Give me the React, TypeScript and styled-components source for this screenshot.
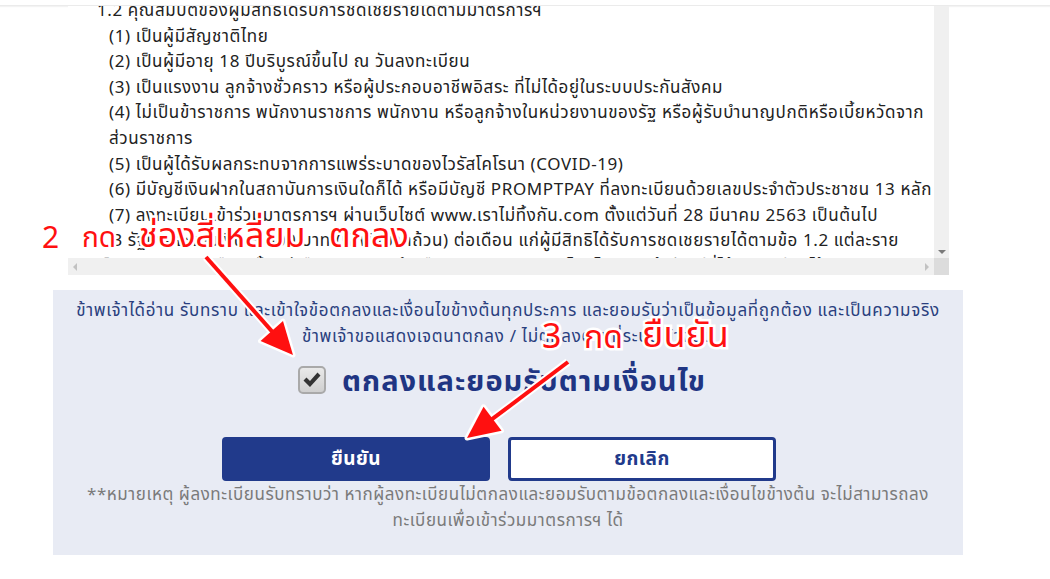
import * as React from 'react';
import styled, { createGlobalStyle } from 'styled-components';

const THAI = '"Noto Sans Thai", "Tahoma", "Leelawadee UI", "Noto Sans", "DejaVu Sans", sans-serif';
const NAVY = '#213a8b';

const GlobalStyle = createGlobalStyle`
    html, body {
        margin: 0;
        padding: 0;
        background: #ffffff;
        font-family: ${THAI};
        overflow: hidden;
    }
`;

const Page = styled.div`
    position: relative;
    width: 1050px;
    height: 579px;
`;

const TopBar = styled.div`
    height: 5px;
    border-bottom: 1px solid #ebebeb;
    box-shadow: 0 1px 1px #f3f3f3;
`;

const Container = styled.div`
    width: 1016px;
    display: flex;
    flex-direction: column;
    align-items: center;
`;

const ScrollFrame = styled.div`
    display: grid;
    grid-template-columns: 866px 15px;
    grid-template-rows: 252px 17px;
    width: 881px;
    margin-left: 1px;
`;

const Viewport = styled.div`
    overflow: hidden;
    background: #fff;
`;

const Terms = styled.div<{ $offset: number }>`
    margin-top: ${(p) => p.$offset}px;
    padding-left: 29px;
    font-size: 17px;
    letter-spacing: 0.6px;
    line-height: 25.6px;
    color: #222;
    white-space: nowrap;
`;

const TermLine = styled.div<{ $indent?: boolean }>`
    padding-left: ${(p) => (p.$indent ? 12 : 0)}px;
`;

const VBar = styled.div`
    background: #f0f0f0;
    display: flex;
    flex-direction: column;
    justify-content: flex-end;
    align-items: center;
    padding-bottom: 4px;
`;

const HBar = styled.div`
    background: #f0f0f0;
    display: flex;
    justify-content: space-between;
    align-items: center;
    padding: 0 5px;
`;

const Corner = styled.div`
    background: #dcdcdc;
`;

const Tri = styled.span<{ $dir: 'down' | 'left' | 'right' }>`
    width: 0;
    height: 0;
    border: 4px solid transparent;
    ${(p) =>
        p.$dir === 'down'
            ? 'border-top: 4px solid #7a7a7a; border-bottom-width: 0;'
            : p.$dir === 'left'
              ? 'border-right: 4px solid #c2c2c2; border-left-width: 0;'
              : 'border-left: 4px solid #c2c2c2; border-right-width: 0;'}
`;

const Panel = styled.div`
    box-sizing: border-box;
    width: 910px;
    height: 265px;
    margin-top: 15px;
    background: #e8ebf4;
    padding: 8px 10px 0;
    text-align: center;
`;

const Intro = styled.p`
    margin: 0;
    font-size: 17px;
    letter-spacing: 0.7px;
    line-height: 26px;
    color: #2a3f7e;
    white-space: nowrap;
`;

const AgreeRow = styled.label`
    display: flex;
    justify-content: center;
    align-items: center;
    gap: 16px;
    height: 36px;
    margin-top: 12px;
    margin-right: 12px;
`;

const CheckBox = styled.span`
    box-sizing: border-box;
    width: 28px;
    height: 28px;
    border: 2px solid #a9a9a9;
    border-radius: 5px;
    background: linear-gradient(#e9e9e9, #cfcfcf);
    display: flex;
    align-items: center;
    justify-content: center;
`;

const AgreeText = styled.span`
    font-size: 29px;
    letter-spacing: 1px;
    font-weight: bold;
    color: #1f3583;
    line-height: 36px;
    margin-top: 4px;
`;

const Buttons = styled.div`
    display: flex;
    justify-content: center;
    gap: 18px;
    margin-top: 39px;
    padding-right: 18px;
`;

const Button = styled.button<{ $primary?: boolean }>`
    box-sizing: border-box;
    width: 268px;
    height: 44px;
    border-radius: 4px;
    border: 3px solid ${NAVY};
    background: ${(p) => (p.$primary ? NAVY : '#fff')};
    color: ${(p) => (p.$primary ? '#fff' : NAVY)};
    font-family: ${THAI};
    font-size: 19px;
    letter-spacing: 0.4px;
    font-weight: bold;
`;

const Note = styled.p`
    margin: 1px 0 0;
    font-size: 17px;
    letter-spacing: 0.55px;
    line-height: 26px;
    color: #7a7a7a;
    white-space: nowrap;
`;

const Overlay = styled.svg`
    position: absolute;
    left: 0;
    top: 0;
    pointer-events: none;
`;

const Callout = styled.span<{ $size: number }>`
    position: absolute;
    font-family: ${THAI};
    font-size: ${(p) => p.$size}px;
    line-height: 1;
    color: #ff1010;
    -webkit-text-stroke: 5px #fff;
    paint-order: stroke fill;
    white-space: nowrap;
`;

const termLines: { text: string; indent?: boolean }[] = [
    { text: '1.2  คุณสมบัติของผู้มีสิทธิได้รับการชดเชยรายได้ตามมาตรการฯ' },
    { text: '(1) เป็นผู้มีสัญชาติไทย', indent: true },
    { text: '(2) เป็นผู้มีอายุ 18 ปีบริบูรณ์ขึ้นไป ณ วันลงทะเบียน', indent: true },
    { text: '(3) เป็นแรงงาน ลูกจ้างชั่วคราว หรือผู้ประกอบอาชีพอิสระ ที่ไม่ได้อยู่ในระบบประกันสังคม', indent: true },
    {
        text: '(4) ไม่เป็นข้าราชการ พนักงานราชการ พนักงาน หรือลูกจ้างในหน่วยงานของรัฐ หรือผู้รับบำนาญปกติหรือเบี้ยหวัดจาก',
        indent: true,
    },
    { text: 'ส่วนราชการ', indent: true },
    { text: '(5) เป็นผู้ได้รับผลกระทบจากการแพร่ระบาดของไวรัสโคโรนา (COVID-19)', indent: true },
    {
        text: '(6) มีบัญชีเงินฝากในสถาบันการเงินใดก็ได้ หรือมีบัญชี PROMPTPAY ที่ลงทะเบียนด้วยเลขประจำตัวประชาชน 13 หลัก',
        indent: true,
    },
    {
        text: '(7) ลงทะเบียนเข้าร่วมมาตรการฯ ผ่านเว็บไซต์ www.เราไม่ทิ้งกัน.com ตั้งแต่วันที่ 28 มีนาคม 2563 เป็นต้นไป',
        indent: true,
    },
    {
        text: '1.3  รัฐบาลจะจ่ายเงิน 5,000 บาท (ห้าพันบาทถ้วน) ต่อเดือน แก่ผู้มีสิทธิได้รับการชดเชยรายได้ตามข้อ 1.2 แต่ละราย',
    },
    { text: 'เป็นระยะเวลา 3 เดือน ตั้งแต่เดือนเมษายน ถึงเดือนมิถุนายน 2563 โดยโอนเงินเข้าบัญชีที่ได้ลงทะเบียนไว้' },
];

function arrow(x1: number, y1: number, x2: number, y2: number, len = 32, half = 15) {
    const dx = x2 - x1;
    const dy = y2 - y1;
    const d = Math.hypot(dx, dy);
    const ux = dx / d;
    const uy = dy / d;
    const bx = x2 - ux * len;
    const by = y2 - uy * len;
    const head = `${x2},${y2} ${bx - uy * half},${by + ux * half} ${bx + uy * half},${by - ux * half}`;
    return { bx: x2 - ux * (len - 4), by: y2 - uy * (len - 4), head };
}

const Arrow: React.FC<{ x1: number; y1: number; x2: number; y2: number }> = ({ x1, y1, x2, y2 }) => {
    const a = arrow(x1, y1, x2, y2);
    return (
        <g>
            <line x1={x1} y1={y1} x2={a.bx} y2={a.by} stroke="#fff" strokeWidth={8} />
            <polygon points={a.head} fill="#fff" stroke="#fff" strokeWidth={5} strokeLinejoin="round" />
            <line x1={x1} y1={y1} x2={a.bx} y2={a.by} stroke="#ff1010" strokeWidth={4} />
            <polygon points={a.head} fill="#ff1010" />
        </g>
    );
};

const Check = () => (
    <svg width="20" height="18" viewBox="0 0 20 18">
        <path d="M1.5 9.5 L4.5 6.5 L8 10 L15.5 1.5 L18.5 4.5 L8 16 Z" fill="#333" />
    </svg>
);

const App: React.FC = () => {
    return (
        <Page>
            <GlobalStyle />
            <TopBar />
            <Container>
                <ScrollFrame>
                    <Viewport>
                        <Terms $offset={-7}>
                            {termLines.map((l, i) => (
                                <TermLine key={i} $indent={l.indent}>
                                    {l.text}
                                </TermLine>
                            ))}
                        </Terms>
                    </Viewport>
                    <VBar>
                        <Tri $dir="down" />
                    </VBar>
                    <HBar>
                        <Tri $dir="left" />
                        <Tri $dir="right" />
                    </HBar>
                    <Corner />
                </ScrollFrame>
                <Panel>
                    <Intro>
                        ข้าพเจ้าได้อ่าน รับทราบ และเข้าใจข้อตกลงและเงื่อนไขข้างต้นทุกประการ และยอมรับว่าเป็นข้อมูลที่ถูกต้อง และเป็นความจริง
                        <br />
                        ข้าพเจ้าขอแสดงเจตนาตกลง / ไม่ตกลงตามที่ระบุไว้ข้างต้น
                    </Intro>
                    <AgreeRow>
                        <CheckBox>
                            <Check />
                        </CheckBox>
                        <AgreeText>ตกลงและยอมรับตามเงื่อนไข</AgreeText>
                    </AgreeRow>
                    <Buttons>
                        <Button $primary>ยืนยัน</Button>
                        <Button>ยกเลิก</Button>
                    </Buttons>
                    <Note>
                        **หมายเหตุ ผู้ลงทะเบียนรับทราบว่า หากผู้ลงทะเบียนไม่ตกลงและยอมรับตามข้อตกลงและเงื่อนไขข้างต้น จะไม่สามารถลง
                        <br />
                        ทะเบียนเพื่อเข้าร่วมมาตรการฯ ได้
                    </Note>
                </Panel>
            </Container>
            <Overlay width={1050} height={579}>
                <Arrow x1={206} y1={257} x2={293} y2={355} />
                <Arrow x1={568} y1={362} x2={467} y2={438} />
            </Overlay>
            <Callout $size={30} style={{ left: 42, top: 224 }}>2</Callout>
            <Callout $size={28} style={{ left: 82, top: 225 }}>กด</Callout>
            <Callout $size={34} style={{ left: 139, top: 220 }}>ช่องสี่เหลี่ยม</Callout>
            <Callout $size={34} style={{ left: 329, top: 220 }}>ตกลง</Callout>
            <Callout $size={34} style={{ left: 542, top: 321 }}>3</Callout>
            <Callout $size={32} style={{ left: 584, top: 322 }}>กด</Callout>
            <Callout $size={36} style={{ left: 642, top: 318 }}>ยืนยัน</Callout>
        </Page>
    );
};

export default App;
